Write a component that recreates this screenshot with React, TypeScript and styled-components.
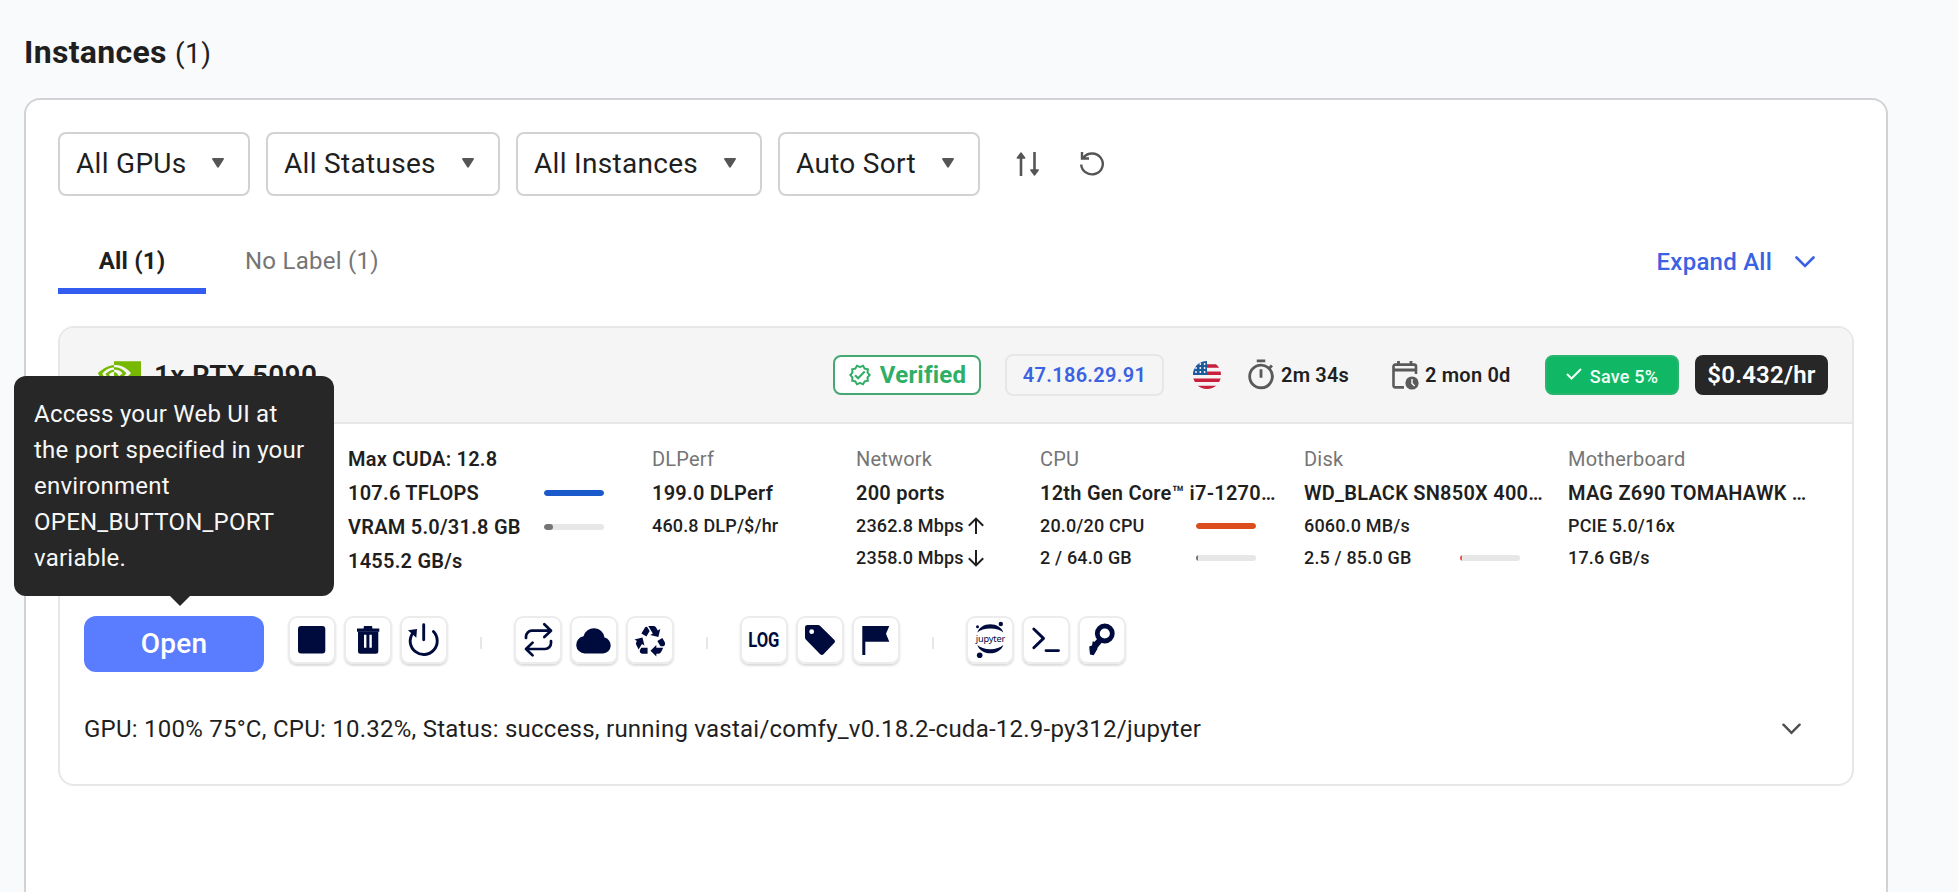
import React from 'react'
import styled, { createGlobalStyle } from 'styled-components'
import { MdOutlineTimer, MdOutlineVerified, MdRecycling } from 'react-icons/md'
import { SiNvidia } from 'react-icons/si'

const GlobalStyle = createGlobalStyle`
	* {
		box-sizing: border-box;
	}

	body {
		margin: 0;
		background-color: #f9fafc;
		color: #1f1f1f;
		font-family: Roboto, 'Liberation Sans', sans-serif;
		letter-spacing: 0.24px;
	}

	button {
		font-family: inherit;
		letter-spacing: inherit;
		color: inherit;
		padding: 0;
	}

	svg {
		display: block;
		flex-shrink: 0;
	}
`

const Page = styled.main`
	height: 892px;
	overflow: hidden;
	padding: 32px 70px 0 24px;
	display: flex;
	flex-direction: column;
`

const Title = styled.h1`
	margin: 0 0 26px;
	font-size: 32px;
	line-height: 40px;
	font-weight: 700;
	letter-spacing: 0.3px;

	span {
		font-size: 28px;
		line-height: 1;
		font-weight: 400;
		letter-spacing: 0.5px;
	}
`

const Panel = styled.section`
	flex: 1;
	padding: 32px 32px 0;
	background-color: #fff;
	border: 2px solid #d2d2d4;
	border-bottom: none;
	border-radius: 16px 16px 0 0;
`

const Filters = styled.div`
	display: flex;
	align-items: center;
	gap: 16px;
`

const Select = styled.button<{ $width: number }>`
	width: ${({ $width }) => $width}px;
	height: 64px;
	padding: 0 24px 2px 16px;
	display: flex;
	align-items: center;
	justify-content: space-between;
	font-size: 28px;
	letter-spacing: 0.3px;
	background-color: #fff;
	border: 2px solid #d2d2d4;
	border-radius: 8px;
`

const ToolButton = styled.button<{ $offset: number }>`
	margin-left: ${({ $offset }) => $offset}px;
	background: none;
	border: none;
`

const TabBar = styled.div`
	margin: 51px 0 32px;
	display: flex;
	justify-content: space-between;
`

const Tabs = styled.div`
	display: flex;
`

const Tab = styled.button<{ $active?: boolean }>`
	width: ${({ $active }) => ($active ? '148px' : 'auto')};
	height: 47px;
	padding: ${({ $active }) => ($active ? '0 0 13px' : '0 39px 13px')};
	font-size: 24px;
	line-height: 28px;
	font-weight: ${({ $active }) => ($active ? 700 : 400)};
	letter-spacing: ${({ $active }) => ($active ? 0.15 : 0.25)}px;
	color: ${({ $active }) => ($active ? '#1f1f1f' : '#757575')};
	background: none;
	border: none;
	border-bottom: 6px solid ${({ $active }) => ($active ? '#335df0' : 'transparent')};
`

const ExpandAll = styled.button`
	height: 30px;
	padding-right: 39px;
	display: flex;
	align-items: center;
	gap: 23px;
	font-size: 24px;
	font-weight: 500;
	color: #3a62e2;
	background: none;
	border: none;
`

const Card = styled.article`
	height: 460px;
	border: 2px solid #e7e7e7;
	border-radius: 16px;
`

const CardHeader = styled.header`
	height: 96px;
	padding: 0 24px 0 38px;
	display: flex;
	align-items: center;
	justify-content: space-between;
	background-color: #f5f5f5;
	border-bottom: 2px solid #e7e7e7;
	border-radius: 14px 14px 0 0;
`

const Gpu = styled.div`
	display: flex;
	align-items: center;
	gap: 13px;
	font-size: 28px;
	font-weight: 600;
	letter-spacing: 0.3px;

	svg {
		color: #76b900;
	}
`

const Meta = styled.div`
	display: flex;
	align-items: center;
	letter-spacing: 0.2px;
`

const Verified = styled.span`
	width: 148px;
	height: 40px;
	display: flex;
	align-items: center;
	justify-content: center;
	gap: 8px;
	font-size: 24px;
	font-weight: 700;
	color: #2fae66;
	background-color: #fff;
	border: 2px solid #45a873;
	border-radius: 8px;
`

const Address = styled.span`
	width: 159px;
	height: 42px;
	margin: 0 29px 0 24px;
	display: flex;
	align-items: center;
	justify-content: center;
	font-size: 20px;
	font-weight: 600;
	letter-spacing: 0.3px;
	color: #3a62e2;
	border: 2px solid #e7e7e7;
	border-radius: 8px;
`

const Duration = styled.span<{ $width: number; $gap: number; $margin: string }>`
	width: ${({ $width }) => $width}px;
	margin: ${({ $margin }) => $margin};
	display: flex;
	align-items: center;
	gap: ${({ $gap }) => $gap}px;
	font-size: 20px;
	font-weight: 600;
	white-space: nowrap;

	svg {
		color: #5a5a5a;
	}
`

const Save = styled.span`
	width: 134px;
	height: 40px;
	margin-right: 16px;
	padding-top: 2px;
	display: flex;
	align-items: center;
	justify-content: center;
	gap: 8px;
	font-size: 18px;
	font-weight: 500;
	color: #effff5;
	background-color: #10b865;
	border: 2px solid #29b56f;
	border-radius: 8px;
`

const Price = styled.span`
	width: 133px;
	height: 40px;
	display: flex;
	align-items: center;
	justify-content: center;
	font-size: 24px;
	font-weight: 600;
	color: #fff;
	background-color: #272727;
	border-radius: 8px;
`

const Specs = styled.div`
	height: 154px;
	padding: 18px 0 0 288px;
	display: grid;
	grid-template-columns: 304px 204px 184px 264px 264px 1fr;
`

const Label = styled.div`
	font-size: 20px;
	line-height: 34px;
	letter-spacing: 0.2px;
	color: #757575;
`

const Line = styled.div<{ $small?: boolean; $barEnd?: number }>`
	width: ${({ $barEnd }) => ($barEnd ? `${$barEnd}px` : 'auto')};
	display: flex;
	align-items: center;
	justify-content: ${({ $barEnd }) => ($barEnd ? 'space-between' : 'flex-start')};
	gap: 3px;
	font-size: ${({ $small }) => ($small ? 18 : 20)}px;
	line-height: ${({ $small }) => ($small ? 32 : 34)}px;
	font-weight: ${({ $small }) => ($small ? 500 : 600)};
	letter-spacing: ${({ $small }) => ($small ? 0.17 : 0.24)}px;
	white-space: nowrap;
`

const Track = styled.span`
	width: 60px;
	height: 6px;
	overflow: hidden;
	background-color: #e7e7e7;
	border-radius: 3px;
`

const Fill = styled.span<{ $color: string }>`
	display: block;
	height: 100%;
	background-color: ${({ $color }) => $color};
	border-radius: 3px;
`

const Actions = styled.div`
	padding: 38px 24px 0;
	display: flex;
	align-items: flex-start;
`

const OpenWrapper = styled.div`
	position: relative;
	margin-right: 24px;
`

const OpenButton = styled.button`
	width: 180px;
	height: 56px;
	padding-bottom: 2px;
	display: block;
	font-size: 28px;
	font-weight: 500;
	color: #fff;
	background-color: #5a7dff;
	border: none;
	border-radius: 12px;
`

const Tooltip = styled.div`
	position: absolute;
	left: -70px;
	bottom: calc(100% + 20px);
	width: 320px;
	padding: 20px;
	font-size: 24px;
	line-height: 36px;
	color: #f7f7f7;
	background-color: #272727;
	border-radius: 12px;

	&::after {
		content: '';
		position: absolute;
		top: 100%;
		left: 156px;
		border: 10px solid transparent;
		border-top-color: #272727;
		border-bottom: none;
	}
`

const Group = styled.div`
	display: flex;
	gap: 8px;
`

const Divider = styled.span`
	width: 2px;
	height: 12px;
	margin: 21px 32px 0;
	background-color: #e7e7e7;
`

const ActionButton = styled.button`
	width: 48px;
	height: 48px;
	display: flex;
	align-items: center;
	justify-content: center;
	color: #000b3d;
	background-color: #fff;
	border: none;
	border-radius: 9px;
	box-shadow: inset 0 0 0 2px #ececec, 0 2px 2px #dcdcdc;
`

const LogText = styled.span`
	font-size: 20px;
	font-weight: 700;
	letter-spacing: 0;
	transform: scaleX(0.83);
`

const Status = styled.div`
	margin-top: 39px;
	padding: 0 51px 0 24px;
	display: flex;
	align-items: center;
	justify-content: space-between;
	font-size: 24px;
	line-height: 36px;

	svg {
		color: #4f4f4f;
	}
`

const Caret = () => (
	<svg width="12" height="10" viewBox="0 0 12 10" fill="#555">
		<path d="M1 0h10c.8 0 1.2.9.7 1.5L6.8 9.2c-.4.6-1.2.6-1.6 0L.3 1.5C-.2.9.2 0 1 0z" />
	</svg>
)

const Chevron = ({ width = 20 }: { width?: number }) => (
	<svg width={width} height="12" viewBox="0 0 20 12" fill="none" stroke="currentColor" strokeWidth="2.6">
		<path d="M1.5 1.5 10 10l8.5-8.5" strokeLinecap="round" />
	</svg>
)

const SortIcon = () => (
	<svg width="24" height="24" viewBox="0 0 24 24" fill="none" stroke="#555" strokeWidth="2.6">
		<path d="M5 24V3M18.5 0v21" />
		<path d="M5 1 1.3 6h7.4zM18.5 23l-3.7-5h7.4z" fill="#555" strokeWidth="1.4" strokeLinejoin="round" />
	</svg>
)

const ResetIcon = () => (
	<svg width="24" height="24" viewBox="0 0 24 24" fill="none" stroke="#555" strokeWidth="2.4">
		<path d="M1.2 12.5A10.8 10.4 0 1 0 3.5 5.5M2 0v6.5h7" />
	</svg>
)

const CalendarIcon = () => (
	<svg width="27" height="29" viewBox="0 0 27 29" fill="none">
		<path d="M12 26.4H3.3c-1 0-1.8-.8-1.8-1.8V5.4c0-1 .8-1.8 1.8-1.8h18.9c1 0 1.8.8 1.8 1.8V13" stroke="currentColor" strokeWidth="2.6" />
		<path d="M2 9h22M6.5 0v4M19 0v4" stroke="currentColor" strokeWidth="2.8" />
		<circle cx="20" cy="22" r="6.6" fill="currentColor" />
		<path d="M20 18v4.4l2.6 2.6" stroke="#f5f5f5" strokeWidth="1.5" />
	</svg>
)

const FlagUS = () => (
	<svg width="28" height="28" viewBox="0 0 28 28">
		<clipPath id="round">
			<circle cx="14" cy="14" r="14" />
		</clipPath>
		<g clipPath="url(#round)">
			<path fill="#f6f3f4" d="M0 0h28v28H0z" />
			<path stroke="#c8203c" strokeWidth="3.6" d="M0 5h28M0 12.3h28M0 19.3h28M0 26.5h28" />
			<path fill="#1c5a9e" d="M0 0h14v14H0z" />
			<g fill="#fff">
				{[3, 7, 11].map((y) => [3, 7.3, 11.6].map((x) => <circle key={`${x}-${y}`} cx={x} cy={y} r="0.9" />))}
			</g>
		</g>
	</svg>
)

const CheckIcon = () => (
	<svg width="16" height="16" viewBox="0 0 16 16" fill="none" stroke="currentColor" strokeWidth="2">
		<path d="m1 6 4.5 4.5L15 1" />
	</svg>
)

const ArrowIcon = ({ down }: { down?: boolean }) => (
	<svg width="18" height="18" viewBox="0 0 18 18" fill="none" stroke="#1f1f1f" strokeWidth="2">
		<path d={down ? 'M9 1v15M1.8 9.2 9 16.4l7.2-7.2' : 'M9 17V2M1.8 8.8 9 1.6l7.2 7.2'} />
	</svg>
)

const Glyph = ({ children }: { children: React.ReactNode }) => (
	<svg width="48" height="48" viewBox="0 0 48 48" fill="currentColor">
		{children}
	</svg>
)

const StopIcon = () => (
	<Glyph>
		<rect x="10" y="10" width="27.3" height="27.5" rx="3" />
	</Glyph>
)

const TrashIcon = () => (
	<Glyph>
		<path d="M19.7 12.5V11c0-.6.4-1 1-1h6.6c.6 0 1 .4 1 1v1.5h7v3.2H13v-3.2z" />
		<path
			fillRule="evenodd"
			d="M14 15.5h20.3v19.7a2.5 2.5 0 0 1-2.5 2.5H16.5a2.5 2.5 0 0 1-2.5-2.5zM20 18.7v13h2.4v-13zm5.4 0v13h2.4v-13z"
		/>
	</Glyph>
)

const RebootIcon = () => (
	<Glyph>
		<path d="M33.4 15.6A13.5 13.5 0 1 1 12.5 17.5M23.7 8.8v15" fill="none" stroke="currentColor" strokeWidth="2.9" strokeLinecap="round" />
		<path d="m8 14.3 9-1.3-.7 8.8z" />
	</Glyph>
)

const RepeatIcon = () => (
	<Glyph>
		<g fill="none" stroke="currentColor" strokeWidth="2.7" strokeLinecap="round" strokeLinejoin="round">
			<path d="M12 22v-1.3a6 6 0 0 1 6-6h19M30.3 8.3l6.7 6.4-6.7 6.4" />
			<path d="M37 25v2a6 6 0 0 1-6 6H12M18.6 26.6 12 33l6.6 6.4" />
		</g>
	</Glyph>
)

const CloudIcon = () => (
	<Glyph>
		<path d="M14.7 37.4a8.6 8.6 0 0 1-1.2-17.1 10.7 10.7 0 0 1 21 1.3 8 8 0 0 1-1.4 15.8z" />
	</Glyph>
)

const TagIcon = () => (
	<Glyph>
		<path
			fillRule="evenodd"
			d="M11.5 9H22c.8 0 1.5.3 2 .8l14.2 14c1 1 1 2.3 0 3.3L27.5 38.2c-1 1-2.3 1-3.3 0L9.8 23.6c-.5-.5-.8-1.2-.8-2V11.5A2.5 2.5 0 0 1 11.5 9zm4.2 4.3a2.4 2.4 0 1 0 0 4.8 2.4 2.4 0 0 0 0-4.8z"
		/>
	</Glyph>
)

const FlagIcon = () => (
	<Glyph>
		<path d="M10.3 10h27L34 17.8l3.3 7.9h-24V39h-3z" />
	</Glyph>
)

const JupyterIcon = () => (
	<Glyph>
		<path d="M11.3 16.5c1.7-5 6.7-8.2 13-8.2s11.4 3.2 13.1 8.2c-3-2.6-7.7-3.9-13.1-3.9s-10 1.3-13 3.9z" />
		<path d="M11.3 29c1.7 5 6.7 8.3 13 8.3s11.4-3.3 13.1-8.3c-3 2.7-7.7 4.2-13.1 4.2s-10-1.5-13-4.2z" />
		<circle cx="11.5" cy="10.7" r="1.5" />
		<circle cx="34.8" cy="8" r="2.2" />
		<circle cx="13.7" cy="39.2" r="2.8" />
		<text x="9.8" y="25.6" fontSize="9.2" fontFamily="'Noto Sans', sans-serif" textLength="29.5" letterSpacing="0">
			jupyter
		</text>
	</Glyph>
)

const TerminalIcon = () => (
	<Glyph>
		<path
			d="m11.8 13 9.7 9.4-9.7 9.4M24 34.6h12.5"
			fill="none"
			stroke="currentColor"
			strokeWidth="2.9"
			strokeLinecap="round"
			strokeLinejoin="round"
		/>
	</Glyph>
)

const KeyIcon = () => (
	<Glyph>
		<circle cx="26.8" cy="17.5" r="7.5" fill="none" stroke="currentColor" strokeWidth="4.8" />
		<path d="m20 22-3.7 4-1.5-1-.8 4.6-2.8.8.8 8 3.7.8 3.4-5.8.6-2 5-6z" />
	</Glyph>
)

const actionGroups = [
	[<StopIcon />, <TrashIcon />, <RebootIcon />],
	[<RepeatIcon />, <CloudIcon />, <MdRecycling size={35} />],
	[<LogText>LOG</LogText>, <TagIcon />, <FlagIcon />],
	[<JupyterIcon />, <TerminalIcon />, <KeyIcon />],
]

const filters = [
	{ label: 'All GPUs', width: 192 },
	{ label: 'All Statuses', width: 234 },
	{ label: 'All Instances', width: 246 },
	{ label: 'Auto Sort', width: 202 },
]

type BarProps = {
	value: number
	color: string
}

const Bar = ({ value, color }: BarProps) => (
	<Track>
		<Fill $color={color} style={{ width: `${value}%` }} />
	</Track>
)

export default function App() {
	return (
		<>
			<GlobalStyle />
			<Page>
				<Title>
					Instances <span>(1)</span>
				</Title>
				<Panel>
					<Filters>
						{filters.map(({ label, width }) => (
							<Select key={label} $width={width}>
								{label}
								<Caret />
							</Select>
						))}
						<ToolButton $offset={20}>
							<SortIcon />
						</ToolButton>
						<ToolButton $offset={24}>
							<ResetIcon />
						</ToolButton>
					</Filters>
					<TabBar>
						<Tabs>
							<Tab $active>All (1)</Tab>
							<Tab>No Label (1)</Tab>
						</Tabs>
						<ExpandAll>
							Expand All
							<Chevron />
						</ExpandAll>
					</TabBar>
					<Card>
						<CardHeader>
							<Gpu>
								<SiNvidia size={43} />
								1x RTX 5090
							</Gpu>
							<Meta>
								<Verified>
									<MdOutlineVerified size={24} />
									Verified
								</Verified>
								<Address>47.186.29.91</Address>
								<FlagUS />
								<Duration $width={107} $gap={3} $margin="0 0 0 23px">
									<MdOutlineTimer size={34} />
									2m 34s
								</Duration>
								<Duration $width={119} $gap={6} $margin="0 34px 0 41px">
									<CalendarIcon />
									2 mon 0d
								</Duration>
								<Save>
									<CheckIcon />
									Save 5%
								</Save>
								<Price>$0.432/hr</Price>
							</Meta>
						</CardHeader>
						<Specs>
							<div>
								<Line>Max CUDA: 12.8</Line>
								<Line $barEnd={256}>
									107.6 TFLOPS
									<Bar value={100} color="#1a5acb" />
								</Line>
								<Line $barEnd={256}>
									VRAM 5.0/31.8 GB
									<Bar value={15.7} color="#757575" />
								</Line>
								<Line>1455.2 GB/s</Line>
							</div>
							<div>
								<Label>DLPerf</Label>
								<Line>199.0 DLPerf</Line>
								<Line $small>460.8 DLP/$/hr</Line>
							</div>
							<div>
								<Label>Network</Label>
								<Line>200 ports</Line>
								<Line $small>
									2362.8 Mbps
									<ArrowIcon />
								</Line>
								<Line $small>
									2358.0 Mbps
									<ArrowIcon down />
								</Line>
							</div>
							<div>
								<Label>CPU</Label>
								<Line>12th Gen Core™ i7-1270…</Line>
								<Line $small $barEnd={216}>
									20.0/20 CPU
									<Bar value={100} color="#dc4c1c" />
								</Line>
								<Line $small $barEnd={216}>
									2 / 64.0 GB
									<Bar value={3.1} color="#757575" />
								</Line>
							</div>
							<div>
								<Label>Disk</Label>
								<Line>WD_BLACK SN850X 400…</Line>
								<Line $small>6060.0 MB/s</Line>
								<Line $small $barEnd={216}>
									2.5 / 85.0 GB
									<Bar value={2.9} color="#ef5350" />
								</Line>
							</div>
							<div>
								<Label>Motherboard</Label>
								<Line>MAG Z690 TOMAHAWK …</Line>
								<Line $small>PCIE 5.0/16x</Line>
								<Line $small>17.6 GB/s</Line>
							</div>
						</Specs>
						<Actions>
							<OpenWrapper>
								<Tooltip>Access your Web UI at the port specified in your environment OPEN_BUTTON_PORT variable.</Tooltip>
								<OpenButton>Open</OpenButton>
							</OpenWrapper>
							{actionGroups.map((icons, i) => (
								<React.Fragment key={i}>
									{i > 0 && <Divider />}
									<Group>
										{icons.map((icon, j) => (
											<ActionButton key={j}>{icon}</ActionButton>
										))}
									</Group>
								</React.Fragment>
							))}
						</Actions>
						<Status>
							GPU: 100% 75°C, CPU: 10.32%, Status: success, running vastai/comfy_v0.18.2-cuda-12.9-py312/jupyter
							<Chevron width={19} />
						</Status>
					</Card>
				</Panel>
			</Page>
		</>
	)
}
